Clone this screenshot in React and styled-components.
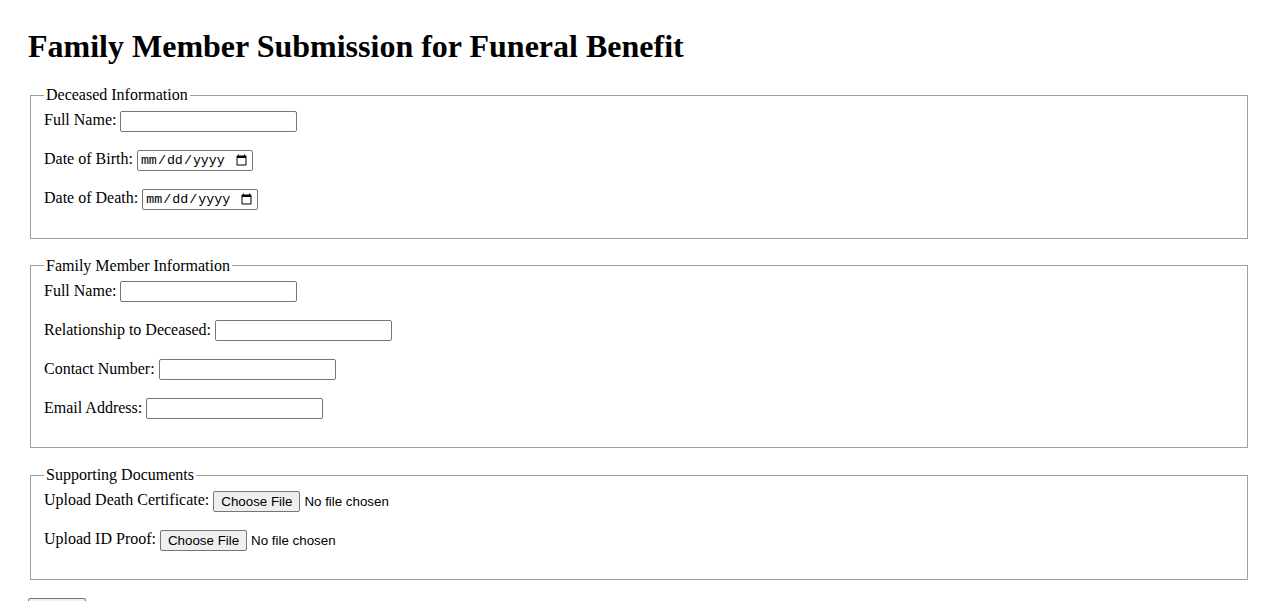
import React from 'react'
import styled, { createGlobalStyle } from 'styled-components'

const GlobalStyle = createGlobalStyle`
  body {
    margin: 8px;
    padding: 20px;
    font-family: "Liberation Serif", "Times New Roman", serif;
    font-size: 16px;
    color: #000;
    background: #fff;
  }
`

const Title = styled.h1`
  font-size: 32px;
  font-weight: bold;
  margin: 0 0 21px;
`

const Fieldset = styled.fieldset`
  margin: 0 2px 18px;
  padding: 0 12px 12.6px 13px;
  border: 1px solid #a0a0a0;
`

const Legend = styled.legend`
  padding: 0 2px;
  line-height: 18px;
`

const Row = styled.div`
  margin: 4px 0 15px;
  line-height: 24px;
`

const Label = styled.label`
  margin-right: 4px;
`

const Field = styled.input`
  font-size: 13.333px;
  border: 1px solid #767676;
  border-radius: 2px;
  padding: 1px 2px;
  height: 21px;
  box-sizing: border-box;
  width: ${(p) => (p.type === 'date' ? '116px' : '177px')};
  vertical-align: middle;
  font-family: ${(p) =>
    p.type === 'date'
      ? '"Liberation Mono", "DejaVu Sans Mono", monospace'
      : '"Liberation Sans", Arial, sans-serif'};
`

const FileInput = styled.input`
  font-family: "Liberation Sans", Arial, sans-serif;
  font-size: 13.333px;
  vertical-align: middle;

  &::file-selector-button {
    font-family: "Liberation Sans", Arial, sans-serif;
    font-size: 13.333px;
    background: #efefef;
    border: 1px solid #767676;
    border-radius: 2px;
    padding: 2px 7px;
    margin-right: 4px;
  }
`

const SubmitButton = styled.button`
  font-family: "Liberation Sans", Arial, sans-serif;
  font-size: 13.333px;
  background: #efefef;
  border: 1px solid #767676;
  border-radius: 2px;
  padding: 2px 8px;
  width: 58px;
`

const deceased = [
  { label: 'Full Name:', type: 'text' },
  { label: 'Date of Birth:', type: 'date' },
  { label: 'Date of Death:', type: 'date' },
]

const family = [
  { label: 'Full Name:', type: 'text' },
  { label: 'Relationship to Deceased:', type: 'text' },
  { label: 'Contact Number:', type: 'tel' },
  { label: 'Email Address:', type: 'email' },
]

const docs = ['Upload Death Certificate:', 'Upload ID Proof:']

export default function App() {
  return (
    <>
      <GlobalStyle />
      <Title>Family Member Submission for Funeral Benefit</Title>
      <form onSubmit={(e) => e.preventDefault()}>
        <Fieldset>
          <Legend>Deceased Information</Legend>
          {deceased.map((f) => (
            <Row key={f.label}>
              <Label>{f.label}</Label>
              <Field type={f.type} />
            </Row>
          ))}
        </Fieldset>
        <Fieldset>
          <Legend>Family Member Information</Legend>
          {family.map((f) => (
            <Row key={f.label}>
              <Label>{f.label}</Label>
              <Field type={f.type} />
            </Row>
          ))}
        </Fieldset>
        <Fieldset>
          <Legend>Supporting Documents</Legend>
          {docs.map((d) => (
            <Row key={d}>
              <Label>{d}</Label>
              <FileInput type="file" />
            </Row>
          ))}
        </Fieldset>
        <SubmitButton type="submit">Submit</SubmitButton>
      </form>
    </>
  )
}
